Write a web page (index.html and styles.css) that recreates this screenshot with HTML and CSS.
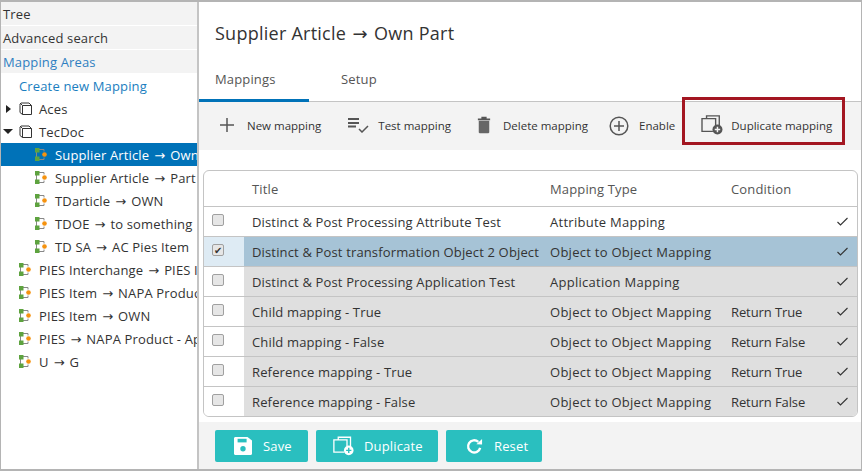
FILE: index.html
```html
<!DOCTYPE html>
<html lang="en">
<head>
    <meta charset="UTF-8">
    <title>Supplier Article → Own Part</title>
    <link rel="stylesheet" href="styles.css">
</head>
<body>
    <svg width="0" height="0" class="defs">
        <symbol id="i-box" viewBox="0 0 13 13">
            <path d="M3.500 3.500h9v9h-9zM1 3.500V2l1-1h8l2.500 2.500M1 3.500v7l2.500 2M3.500 3.500L1.500 1.500" fill="none" stroke="#333" stroke-width="1"/>
        </symbol>
        <symbol id="i-map" viewBox="0 0 12 13">
            <path d="M4 1.500h5v2M4 11.500h5v-2M1.500 4v5" fill="none" stroke="#888" stroke-width="1"/>
            <rect x="0" y="0" width="4.500" height="4.500" fill="#5ea33f"/>
            <rect x="0" y="8.500" width="4.500" height="4.500" fill="#5ea33f"/>
            <circle cx="9.500" cy="6.500" r="2.300" fill="#f5920f"/>
        </symbol>
        <symbol id="i-dup" viewBox="0 0 24 22">
            <path d="M6 4V1h14v11" fill="none" stroke="currentColor" stroke-width="1.500"/>
            <path d="M13 18H1V4h15v7" fill="none" stroke="currentColor" stroke-width="1.500"/>
            <circle cx="18" cy="16" r="5.500" fill="currentColor"/>
            <path d="M18 13v6M15 16h6" stroke="var(--plus)" stroke-width="1.600"/>
        </symbol>
        <symbol id="i-tick" viewBox="0 0 11 9">
            <path d="M.5 5l3 3 7-7" fill="none" stroke="#333" stroke-width="1.100"/>
        </symbol>
    </svg>
    <div class="app">
        <aside class="sidebar">
            <div class="acc">Tree</div>
            <div class="acc">Advanced search</div>
            <div class="acc acc-open">Mapping Areas</div>
            <ul class="tree">
                <li class="node lvl-create"><a>Create new Mapping</a></li>
                <li class="node lvl-0"><span class="caret caret-right"></span><svg class="ic ic-box"><use href="#i-box"/></svg>Aces</li>
                <li class="node lvl-0"><span class="caret caret-down"></span><svg class="ic ic-box"><use href="#i-box"/></svg>TecDoc</li>
                <li class="node lvl-1 selected"><svg class="ic"><use href="#i-map"/></svg><span>Supplier Article <span class="arr">→</span> Own Part</span></li>
                <li class="node lvl-1"><svg class="ic"><use href="#i-map"/></svg><span>Supplier Article <span class="arr">→</span> Part Group</span></li>
                <li class="node lvl-1"><svg class="ic"><use href="#i-map"/></svg><span>TDarticle <span class="arr">→</span> OWN</span></li>
                <li class="node lvl-1"><svg class="ic"><use href="#i-map"/></svg><span>TDOE <span class="arr">→</span> to something</span></li>
                <li class="node lvl-1"><svg class="ic"><use href="#i-map"/></svg><span>TD SA <span class="arr">→</span> AC Pies Item</span></li>
                <li class="node lvl-2"><svg class="ic"><use href="#i-map"/></svg><span>PIES Interchange <span class="arr">→</span> PIES Item</span></li>
                <li class="node lvl-2"><svg class="ic"><use href="#i-map"/></svg><span>PIES Item <span class="arr">→</span> NAPA Product</span></li>
                <li class="node lvl-2"><svg class="ic"><use href="#i-map"/></svg><span>PIES Item <span class="arr">→</span> OWN</span></li>
                <li class="node lvl-2"><svg class="ic"><use href="#i-map"/></svg><span>PIES <span class="arr">→</span> NAPA Product - Application</span></li>
                <li class="node lvl-2"><svg class="ic"><use href="#i-map"/></svg><span>U <span class="arr">→</span> G</span></li>
            </ul>
        </aside>
        <main class="main">
            <h1 class="title">Supplier Article <span class="arr">→</span> Own Part</h1>
            <div class="tabs">
                <div class="tab tab-active">Mappings</div>
                <div class="tab">Setup</div>
            </div>
            <div class="toolbar">
                <div class="tool tool-new">
                    <svg width="16" height="16" viewBox="0 0 16 16"><path d="M8 1v14M1 8h14" stroke="#555" stroke-width="1.500"/></svg>
                    New mapping
                </div>
                <div class="tool tool-test">
                    <svg width="22" height="16" viewBox="0 0 22 16"><path d="M1 2h11M1 6h11M1 9.500h8" stroke="#555" stroke-width="1.800"/><path d="M12 12l3 3 6-6" fill="none" stroke="#555" stroke-width="1.500"/></svg>
                    Test mapping
                </div>
                <div class="tool tool-del">
                    <svg width="14" height="18" viewBox="0 0 16 20"><path d="M5 1.500h6M1 3.500h14" stroke="#555" stroke-width="2"/><path d="M2 5h12v13.500l-1 1H3l-1-1z" fill="#666"/></svg>
                    Delete mapping
                </div>
                <div class="tool tool-enable">
                    <svg class="enable-ic" width="20" height="20" viewBox="0 0 20 20"><circle cx="10" cy="10" r="8.800" fill="none" stroke="#555" stroke-width="1.500"/><path d="M10 5v10M5 10h10" stroke="#555" stroke-width="1.500"/></svg>
                    Enable
                </div>
                <div class="tool tool-dup">
                    <svg class="dup-dark" width="22" height="20"><use href="#i-dup"/></svg>
                    Duplicate mapping
                </div>
            </div>
            <div class="callout"></div>
            <div class="grid-wrap">
                <table class="grid">
                    <colgroup>
                        <col class="c-check"><col class="c-title"><col class="c-type"><col class="c-cond"><col class="c-on">
                    </colgroup>
                    <thead>
                        <tr><th></th><th>Title</th><th>Mapping Type</th><th>Condition</th><th></th></tr>
                    </thead>
                    <tbody>
                        <tr class="row-plain">
                            <td class="check"><span class="box"></span></td>
                            <td>Distinct &amp; Post Processing Attribute Test</td><td class="type">Attribute Mapping</td><td class="cond"></td><td class="on"><svg class="tick"><use href="#i-tick"/></svg></td>
                        </tr>
                        <tr class="row-sel">
                            <td class="check"><span class="box box-on">✔</span></td>
                            <td>Distinct &amp; Post transformation Object 2 Object</td><td class="type">Object to Object Mapping</td><td class="cond"></td><td class="on"><svg class="tick"><use href="#i-tick"/></svg></td>
                        </tr>
                        <tr>
                            <td class="check"><span class="box"></span></td>
                            <td>Distinct &amp; Post Processing Application Test</td><td class="type">Application Mapping</td><td class="cond"></td><td class="on"><svg class="tick"><use href="#i-tick"/></svg></td>
                        </tr>
                        <tr>
                            <td class="check"><span class="box"></span></td>
                            <td>Child mapping - True</td><td class="type">Object to Object Mapping</td><td class="cond">Return True</td><td class="on"><svg class="tick"><use href="#i-tick"/></svg></td>
                        </tr>
                        <tr>
                            <td class="check"><span class="box"></span></td>
                            <td>Child mapping - False</td><td class="type">Object to Object Mapping</td><td class="cond">Return False</td><td class="on"><svg class="tick"><use href="#i-tick"/></svg></td>
                        </tr>
                        <tr>
                            <td class="check"><span class="box"></span></td>
                            <td>Reference mapping - True</td><td class="type">Object to Object Mapping</td><td class="cond">Return True</td><td class="on"><svg class="tick"><use href="#i-tick"/></svg></td>
                        </tr>
                        <tr>
                            <td class="check"><span class="box"></span></td>
                            <td>Reference mapping - False</td><td class="type">Object to Object Mapping</td><td class="cond">Return False</td><td class="on"><svg class="tick"><use href="#i-tick"/></svg></td>
                        </tr>
                    </tbody>
                </table>
            </div>
            <div class="actions">
                <button class="btn btn-save">
                    <svg width="18" height="18" viewBox="0 0 20 20"><path d="M1 0h14l5 4v15l-1 1H1l-1-1V1z" fill="#fff"/><rect x="4" y="2" width="10" height="4" fill="#2abfbf"/><circle cx="10" cy="13" r="3" fill="#2abfbf"/></svg>
                    Save
                </button>
                <button class="btn btn-dup">
                    <svg class="dup-light" width="21" height="20"><use href="#i-dup"/></svg>
                    Duplicate
                </button>
                <button class="btn btn-reset">
                    <svg width="17" height="17" viewBox="0 0 18 18"><path d="M15 10.500A6.500 6.500 0 1 1 13 4" fill="none" stroke="#fff" stroke-width="2.500"/><path d="M11 6.500L17 7V1z" fill="#fff"/></svg>
                    Reset
                </button>
            </div>
        </main>
    </div>
</body>
</html>
```

FILE: styles.css
```css
* {
    box-sizing: border-box;
}
body {
    margin: 0;
    font-family: "Open Sans", "Liberation Sans", sans-serif;
    font-size: 13px;
    letter-spacing: .15px;
    color: #333;
    background: #fff;
    overflow: hidden;
}
.defs {
    position: absolute;
}
.arr {
    margin: 0 1.500px;
    font-family: "DejaVu Sans", sans-serif;
    letter-spacing: 0;
}
.app {
    display: flex;
    width: 862px;
    height: 471px;
    border: solid #b4b4b4;
    border-width: 2px 1px 2px 1px;
}
.sidebar {
    width: 198px;
    flex: none;
    border-right: 2px solid #c4c4c4;
    overflow: hidden;
}
.acc {
    height: 23px;
    margin-bottom: 1px;
    padding-left: 2px;
    line-height: 25px;
    background: #f3f3f3;
    white-space: nowrap;
}
.acc-open {
    color: #2f7fc1;
}
.tree {
    list-style: none;
    margin: 0;
    padding: 0;
}
.node {
    display: flex;
    align-items: center;
    height: 23px;
    white-space: nowrap;
    overflow: hidden;
}
.node .ic {
    width: 12px;
    height: 13px;
    flex: none;
    margin-right: 8px;
}
.node .ic-box {
    width: 13px;
    margin-right: 7px;
}
.lvl-create {
    padding-left: 18px;
    color: #1a7ec0;
}
.lvl-0 {
    padding-left: 2px;
}
.lvl-1 {
    padding-left: 34px;
}
.lvl-2 {
    padding-left: 18px;
}
.selected {
    background: #0072b8;
    color: #fff;
}
.caret {
    width: 0;
    height: 0;
    flex: none;
}
.caret-right {
    margin-left: 3px;
    margin-right: 8px;
    border-left: 5px solid #222;
    border-top: 4px solid transparent;
    border-bottom: 4px solid transparent;
}
.caret-down {
    margin-right: 6px;
    border-top: 5px solid #222;
    border-left: 5px solid transparent;
    border-right: 5px solid transparent;
}
.main {
    position: relative;
    flex: 1;
    min-width: 0;
    display: flex;
    flex-direction: column;
}
.title {
    margin: 0;
    padding: 17px 0 0 16px;
    height: 59px;
    font-size: 18px;
    font-weight: 400;
    line-height: 28px;
    letter-spacing: .25px;
}
.tabs {
    display: flex;
    height: 41px;
    border-bottom: 1px solid #c4c4c4;
}
.tab {
    width: 110px;
    padding: 8px 0 0 16px;
    line-height: 20px;
    color: #555;
}
.tab + .tab {
    padding-left: 32px;
}
.tab-active {
    height: 41px;
    border-bottom: 3px solid #0072b8;
}
.toolbar {
    display: flex;
    align-items: center;
    height: 48px;
    padding-bottom: 2px;
    background: #f3f3f3;
    font-size: 11.5px;
    letter-spacing: 0;
}
.tool {
    display: flex;
    align-items: center;
    white-space: nowrap;
}
.tool-new {
    margin-left: 20px;
    gap: 12px;
}
.tool-test {
    margin-left: 26px;
    gap: 9px;
}
.tool-del {
    margin-left: 26px;
    gap: 12px;
}
.tool-enable {
    margin-left: 21px;
    gap: 10px;
}
.enable-ic {
    margin-top: 2px;
}
.tool-dup {
    margin-left: 26px;
    gap: 8px;
}
.dup-dark {
    color: #555;
    --plus: #f3f3f3;
}
.dup-light {
    color: #fff;
    --plus: #2abfbf;
}
.callout {
    position: absolute;
    left: 483px;
    top: 95px;
    width: 163px;
    height: 48px;
    border: 3px solid #a31621;
}
.grid-wrap {
    margin: 20px 0 5px 4px;
    width: 655px;
    height: 247px;
    flex: none;
    border: 1px solid #c4c4c4;
    border-radius: 6px;
    overflow: hidden;
}
.grid {
    width: 100%;
    border-collapse: collapse;
    table-layout: fixed;
}
.c-check {
    width: 40px;
}
.c-title {
    width: 298px;
}
.c-type {
    width: 181px;
}
.c-cond {
    width: 100px;
}
.grid th {
    height: 35px;
    padding: 1px 0 0 8px;
    font-weight: 400;
    text-align: left;
    color: #555;
    border-bottom: 1px solid #c4c4c4;
}
.grid td {
    height: 30px;
    padding: 1px 0 0 8px;
    background: #dfdfdf;
    border-bottom: 1px solid #c4c4c4;
    white-space: nowrap;
    overflow: hidden;
}
.grid td.type {
    letter-spacing: .27px;
}
.grid td.cond {
    letter-spacing: -.1px;
}
.grid tr:last-child td {
    border-bottom: 0;
}
.grid td.check {
    padding: 0 0 0 8px;
    background: #fff;
}
.row-plain td {
    background: #fff;
}
.row-sel td {
    background: #a6c3d6;
}
.grid .row-sel td.check {
    background: #deebf4;
}
.grid td.on {
    padding: 0 0 0 14px;
}
.tick {
    display: block;
    width: 11px;
    height: 9px;
}
.box {
    display: block;
    width: 12px;
    height: 12px;
    margin-top: -3px;
    border: 1px solid #a0a0a0;
    border-radius: 2px;
    background: #e6e6e6;
    font-size: 10px;
    line-height: 10px;
    text-align: center;
}
.actions {
    flex: 1;
    display: flex;
    gap: 8px;
    padding: 8px 0 0 16px;
    background: #f3f3f3;
}
.btn {
    display: flex;
    align-items: center;
    height: 32px;
    padding: 0;
    border: none;
    border-radius: 2px;
    background: #2abfbf;
    color: #fff;
    font-family: inherit;
    font-size: 13px;
    letter-spacing: inherit;
}
.btn-save {
    width: 93px;
    padding-left: 19px;
    gap: 11px;
}
.btn-dup {
    width: 122px;
    padding-left: 17px;
    gap: 10px;
}
.btn-reset {
    width: 96px;
    padding-left: 20px;
    gap: 11px;
}
```
